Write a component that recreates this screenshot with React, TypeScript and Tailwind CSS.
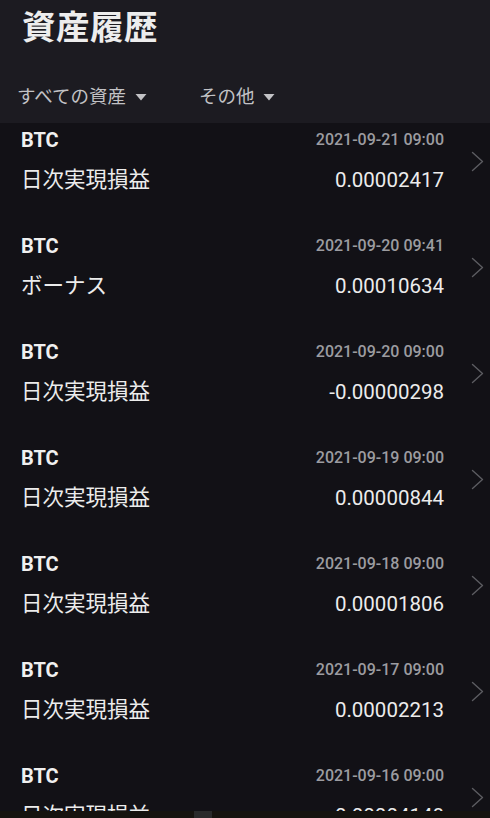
import React from 'react';

const ROWS = [
    { date: '2021-09-21 09:00', label: '日次実現損益', amount: '0.00002417' },
    { date: '2021-09-20 09:41', label: 'ボーナス', amount: '0.00010634' },
    { date: '2021-09-20 09:00', label: '日次実現損益', amount: '-0.00000298' },
    { date: '2021-09-19 09:00', label: '日次実現損益', amount: '0.00000844' },
    { date: '2021-09-18 09:00', label: '日次実現損益', amount: '0.00001806' },
    { date: '2021-09-17 09:00', label: '日次実現損益', amount: '0.00002213' },
    { date: '2021-09-16 09:00', label: '日次実現損益', amount: '0.00004148' },
];

const FONT = { fontFamily: 'Roboto, "Noto Sans CJK JP", sans-serif' };

const Caret = () => (
    <svg width="12" height="8" viewBox="0 0 12 8" className="ml-[9px]">
        <path d="M0.5 1 L11.5 1 L6 7.5 Z" fill="#c2c2c5" />
    </svg>
);

const Chevron = () => (
    <svg width="13" height="21" viewBox="0 0 13 21" fill="none">
        <path d="M1.5 1.5 L11.5 10.5 L1.5 19.5" stroke="#5c5c61" strokeWidth="1.4" strokeLinecap="round" strokeLinejoin="round" />
    </svg>
);

export default function App() {
    return (
        <div className="w-[490px] h-[818px] flex flex-col overflow-hidden bg-[#121116]" style={FONT}>
            {/* Header */}
            <header className="h-[123px] shrink-0 bg-[#1c1b21] pt-[8px]">
                <h1 className="pl-[22px] text-[33.5px] leading-[40px] font-bold text-[#ededed] tracking-[0.5px]">
                    資産履歴
                </h1>
                <div className="mt-[37px] pl-[17px] h-[24px] flex items-center text-[18.5px] leading-[24px] text-[#c2c2c5]">
                    <div className="flex items-center">
                        すべての資産
                        <Caret />
                    </div>
                    <div className="flex items-center ml-[52px]">
                        その他
                        <Caret />
                    </div>
                </div>
            </header>

            {/* List */}
            <div className="flex-1 overflow-hidden">
                {ROWS.map((row, i) => (
                    <div key={i} className="h-[106px] flex items-start pl-[21px] pt-[5px]">
                        <div className="w-[423px] flex flex-col">
                            <div className="h-[24px] flex items-center justify-between">
                                <span className="text-[20px] font-bold text-[#f0f0f0] leading-[24px]">BTC</span>
                                <span className="text-[16px] font-medium text-[#9c9ca0] leading-[24px]">{row.date}</span>
                            </div>
                            <div className="mt-[14px] h-[28px] flex items-center justify-between">
                                <span className="text-[21.5px] text-[#ececec] leading-[28px]">{row.label}</span>
                                <span className="text-[20.5px] text-[#ececec] leading-[28px]">{row.amount}</span>
                            </div>
                        </div>
                        <div className="ml-[27px] mt-[23px]">
                            <Chevron />
                        </div>
                    </div>
                ))}
            </div>

            {/* Bottom bar */}
            <div className="h-[7px] shrink-0 bg-[#16130f] flex">
                <div className="w-[194px]" />
                <div className="w-[18px] bg-[#2a2a2b]" />
            </div>
        </div>
    );
}
